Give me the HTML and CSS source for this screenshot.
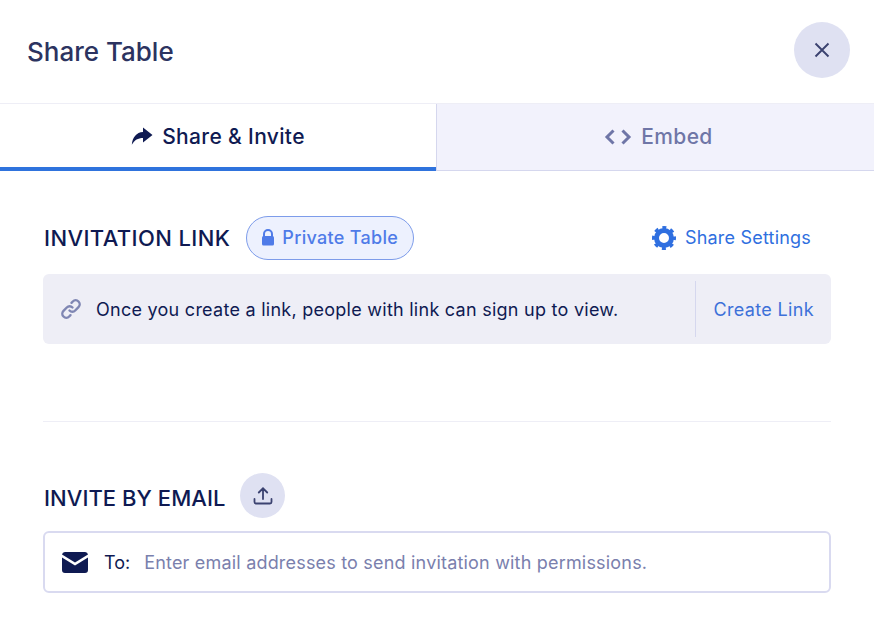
FILE: index.html
```html
<!DOCTYPE html>
<html lang="en">
<head>
  <meta charset="UTF-8" />
  <title>Share Table</title>
  <link rel="stylesheet" href="styles.css">
</head>
<body>
  <div class="header">
    <h1>Share Table</h1>
    <button class="close-btn">
      <svg width="16" height="16" viewBox="0 0 16 16"><path d="M1.500 1.500l13 13M14.500 1.500l-13 13" fill="none" stroke="#3b4270" stroke-width="1.900"/></svg>
    </button>
  </div>

  <div class="tabs">
    <div class="tab active">
      <svg width="22" height="19" viewBox="0 0 22 19"><path d="M12 .5l9.500 7.500-9.500 7.500V11c-5 0-8.500 2-11.200 6.800C1.500 10 5.500 5.500 12 5z" fill="#0f1a52"/></svg>
      Share &amp; Invite
    </div>
    <div class="tab">
      <svg width="28" height="18" viewBox="0 0 28 18"><path d="M9.500 2.500L3 9l6.500 6.500M18.500 2.500L25 9l-6.500 6.500" fill="none" stroke="#6f76a7" stroke-width="3"/></svg>
      Embed
    </div>
  </div>

  <div class="content">
    <div class="section-head">
      <h2>INVITATION LINK</h2>
      <span class="pill">
        <svg width="14" height="17" viewBox="0 0 14 17"><path d="M3 8V5a4 4 0 0 1 8 0v3" fill="none" stroke="#4f7be8" stroke-width="2"/><rect x="1" y="7" width="12" height="9.500" rx="1.500" fill="#4f7be8"/></svg>
        Private Table
      </span>
      <a class="settings">
        <svg width="24" height="24" viewBox="0 0 24 24"><g fill="none" stroke="#2f6fe0"><circle cx="12" cy="12" r="7.500" stroke-width="5"/><circle cx="12" cy="12" r="10.500" stroke-width="3" stroke-dasharray="4 4.250" stroke-dashoffset="2"/></g></svg>
        Share Settings
      </a>
    </div>

    <div class="link-box">
      <div class="link-msg">
        <svg width="22" height="22" viewBox="0 0 22 22"><g fill="none" stroke="#7f86b3" stroke-width="2.400" stroke-linecap="round"><path d="M9.500 12.500a4 4 0 0 0 5.700 0l3.300-3.300a4 4 0 0 0-5.700-5.700l-1.300 1.300"/><path d="M12.500 9.500a4 4 0 0 0-5.700 0l-3.300 3.300a4 4 0 0 0 5.700 5.700l1.300-1.300"/></g></svg>
        Once you create a link, people with link can sign up to view.
      </div>
      <a class="create-link">Create Link</a>
    </div>

    <hr class="divider">

    <div class="section-head email-head">
      <h2>INVITE BY EMAIL</h2>
      <button class="upload-btn">
        <svg width="20" height="20" viewBox="0 0 20 20"><path d="M10 13V2.500M5.800 6.500L10 2.300l4.200 4.200M1.500 13v3a1.500 1.500 0 0 0 1.500 1.500h14a1.500 1.500 0 0 0 1.500-1.500v-3" fill="none" stroke="#3b4270" stroke-width="1.800" stroke-linecap="round"/></svg>
      </button>
    </div>

    <div class="email-box">
      <svg width="26" height="21" viewBox="0 0 26 21"><path fill="#0f1a52" d="M3 0h20a3 3 0 0 1 3 2.500L13 10.500 0 2.500A3 3 0 0 1 3 0zM0 5.500l13 8 13-8V18a3 3 0 0 1-3 3H3a3 3 0 0 1-3-3z"/></svg>
      <span class="to">To:</span>
      <span class="placeholder">Enter email addresses to send invitation with permissions.</span>
    </div>
  </div>
</body>
</html>
```

FILE: styles.css
```css
body {
  margin: 0;
  font-family: Inter, Lato, sans-serif;
  background: #fff;
  color: #0f1a52;
}
.header {
  display: flex;
  align-items: center;
  justify-content: space-between;
  height: 103px;
  padding: 0 24px 0 27px;
}
h1 {
  margin: 0;
  font-size: 26px;
  font-weight: 500;
  color: #2c3360;
}
.close-btn {
  width: 56px;
  height: 56px;
  margin-bottom: 3px;
  border: none;
  border-radius: 50%;
  background: #dfe1f2;
  display: flex;
  align-items: center;
  justify-content: center;
  padding: 0;
}
.tabs {
  display: flex;
  height: 67px;
  border-top: 1px solid #eeeef6;
}
.tab {
  flex: 1;
  display: flex;
  align-items: center;
  justify-content: center;
  gap: 9px;
  padding: 0 0 1px 6px;
  font-size: 21px;
  font-weight: 500;
  letter-spacing: 0.35px;
  color: #6f76a7;
  background: #f2f2fc;
  border-left: 1px solid #d5d7ee;
  border-bottom: 1px solid #d5d7ee;
}
.tab.active {
  flex: 0 0 436px;
  padding: 2px 0 0;
  color: #0f1a52;
  background: #fff;
  border-left: none;
  border-bottom: 4px solid #2f73dd;
}
.content {
  padding: 44px 43px 0;
}
.section-head {
  display: flex;
  align-items: center;
  height: 45px;
}
h2 {
  margin: 0 0 0 1px;
  font-size: 22px;
  font-weight: 500;
  letter-spacing: 0.4px;
}
.pill {
  display: flex;
  align-items: center;
  gap: 7px;
  height: 44px;
  box-sizing: border-box;
  margin-left: 16px;
  padding: 0 15px 0 14px;
  border: 1px solid #7d9cea;
  border-radius: 22px;
  background: #edf1fe;
  color: #4f7be8;
  font-size: 18px;
  font-weight: 500;
  letter-spacing: 0.3px;
}
.settings {
  display: flex;
  align-items: center;
  gap: 9px;
  margin-left: auto;
  margin-right: 20px;
  color: #2f6fe0;
  font-size: 18px;
  letter-spacing: 0.2px;
}
.link-box {
  display: flex;
  align-items: center;
  height: 70px;
  margin-top: 14px;
  border-radius: 6px;
  background: #eeeef6;
}
.link-msg {
  flex: 1;
  display: flex;
  align-items: center;
  gap: 14px;
  padding-left: 17px;
  font-size: 18px;
  letter-spacing: 0.26px;
}
.create-link {
  display: flex;
  align-items: center;
  height: 56px;
  padding: 0 17px;
  border-left: 1px solid #d5d7ee;
  color: #3d71d9;
  font-size: 18px;
  letter-spacing: 0.35px;
}
.divider {
  height: 1px;
  margin: 77px 0 0;
  border: none;
  background: #eeeef6;
}
.email-head {
  margin-top: 51px;
}
.email-head h2 {
  padding-top: 5px;
  letter-spacing: 0.05px;
}
.upload-btn {
  width: 45px;
  height: 45px;
  margin-left: 15px;
  border: none;
  border-radius: 50%;
  background: #dfe1f2;
  display: flex;
  align-items: center;
  justify-content: center;
  padding: 0;
}
.email-box {
  display: flex;
  align-items: center;
  height: 62px;
  box-sizing: border-box;
  margin-top: 13px;
  padding: 0 17px;
  border: 2px solid #d9daf0;
  border-radius: 6px;
  font-size: 18px;
}
.to {
  margin-left: 16px;
}
.placeholder {
  margin-left: 14px;
  letter-spacing: 0.19px;
  color: #7a80ad;
}
```
